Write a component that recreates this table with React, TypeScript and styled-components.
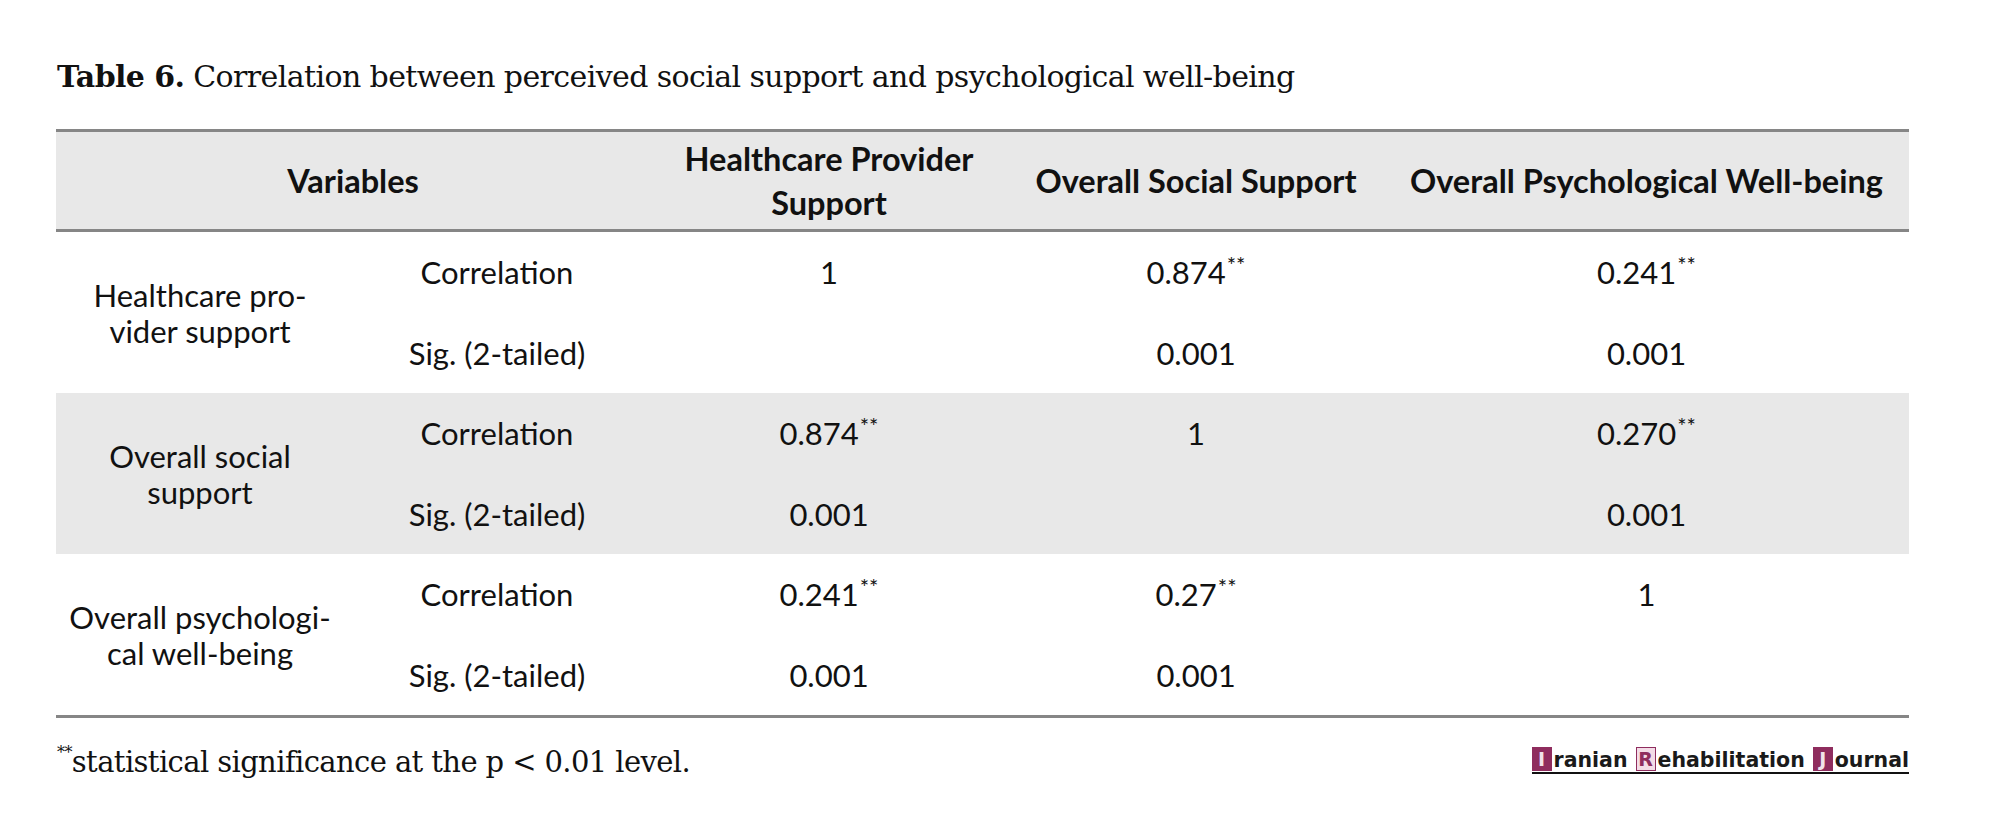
import React from 'react'
import styled, { createGlobalStyle } from 'styled-components'

const GlobalStyle = createGlobalStyle`
  html, body {
    margin: 0;
    padding: 0;
    background: #fff;
  }
`

const SERIF = '"DejaVu Serif", "Liberation Serif", serif'
const SANS = 'Lato, "Open Sans", sans-serif'
const RULE = '3px solid #868686'
const SHADE = '#e8e8e8'

const Page = styled.div`
  width: 1853px;
  padding: 58px 0 0 56px;
  color: #111;
`

const Caption = styled.div`
  font-family: ${SERIF};
  font-size: 30px;
  line-height: 38px;
  margin-bottom: 33px;
  padding-left: 1px;
  letter-spacing: -0.6px;

  b {
    font-weight: 700;
  }
`

const Table = styled.table`
  width: 1853px;
  border-collapse: collapse;
  table-layout: fixed;
  font-family: ${SANS};
  font-size: 31px;
  border-top: ${RULE};
  border-bottom: ${RULE};
`

const Head = styled.thead`
  background: ${SHADE};
  border-bottom: ${RULE};
`

const HeadCell = styled.th`
  height: 97px;
  padding: 0;
  font-weight: 700;
  font-size: 32.5px;
  line-height: 44px;
  text-align: center;
  vertical-align: middle;
  white-space: nowrap;
`

const Group = styled.tbody<{ shaded?: boolean }>`
  background: ${({ shaded }) => (shaded ? SHADE : '#fff')};
`

const Cell = styled.td`
  height: 80.5px;
  padding: 0;
  text-align: center;
  vertical-align: middle;
  line-height: 36px;
  white-space: nowrap;
`

const VarCell = styled(Cell)`
  padding: 0;
`

const Sup = styled.sup`
  font-size: 22px;
  line-height: 0;
  vertical-align: 11px;
  margin-left: 1px;
`

const Footer = styled.div`
  width: 1853px;
  display: flex;
  justify-content: space-between;
  align-items: center;
  margin-top: 27px;
`

const Note = styled.div`
  font-family: ${SERIF};
  font-size: 29px;
  padding-left: 1px;
  letter-spacing: -0.6px;

  sup {
    font-size: 16px;
    vertical-align: 14px;
    line-height: 0;
  }
`

const Logo = styled.div`
  display: flex;
  align-items: flex-end;
  font-family: "DejaVu Sans", Verdana, sans-serif;
  font-weight: 700;
  font-size: 20.5px;
  color: #1a1a1a;
  border-bottom: 2px solid #111;
  padding-bottom: 1px;
  line-height: 22px;
  margin-top: -4px;
`

const LogoWord = styled.span`
  display: flex;
  align-items: flex-end;
  margin-right: 8px;

  &:last-child {
    margin-right: 0;
  }
`

const Initial = styled.span<{ light?: boolean }>`
  display: inline-flex;
  align-items: center;
  justify-content: center;
  width: 18px;
  height: 22px;
  margin-right: 2px;
  background: ${({ light }) => (light ? '#f3dce7' : '#8f2d5e')};
  border: 1px solid #8f2d5e;
  color: ${({ light }) => (light ? '#8f2d5e' : '#f1e4ea')};
  font-size: 19px;
`

type Val = { v: string; sig?: boolean }

const rows: { label: string[]; corr: Val[]; p: string[] }[] = [
  {
    label: ['Healthcare pro-', 'vider support'],
    corr: [{ v: '1' }, { v: '0.874', sig: true }, { v: '0.241', sig: true }],
    p: ['', '0.001', '0.001'],
  },
  {
    label: ['Overall social', 'support'],
    corr: [{ v: '0.874', sig: true }, { v: '1' }, { v: '0.270', sig: true }],
    p: ['0.001', '', '0.001'],
  },
  {
    label: ['Overall psychologi-', 'cal well-being'],
    corr: [{ v: '0.241', sig: true }, { v: '0.27', sig: true }, { v: '1' }],
    p: ['0.001', '0.001', ''],
  },
]

const widths = [288, 306, 358, 376, 525]

export default function App() {
  return (
    <Page>
      <GlobalStyle />
      <Caption>
        <b>Table 6.</b> Correlation between perceived social support and psychological well-being
      </Caption>
      <Table>
        <colgroup>
          {widths.map((w, i) => (
            <col key={i} style={{ width: w }} />
          ))}
        </colgroup>
        <Head>
          <tr>
            <HeadCell colSpan={2}>Variables</HeadCell>
            <HeadCell>
              Healthcare Provider
              <br />
              Support
            </HeadCell>
            <HeadCell>Overall Social Support</HeadCell>
            <HeadCell>Overall Psychological Well-being</HeadCell>
          </tr>
        </Head>
        {rows.map((r, i) => (
          <Group key={i} shaded={i === 1}>
            <tr>
              <VarCell rowSpan={2}>
                {r.label[0]}
                <br />
                {r.label[1]}
              </VarCell>
              <Cell>Correlation</Cell>
              {r.corr.map((c, j) => (
                <Cell key={j}>
                  {c.v}
                  {c.sig && <Sup>**</Sup>}
                </Cell>
              ))}
            </tr>
            <tr>
              <Cell>Sig. (2-tailed)</Cell>
              {r.p.map((p, j) => (
                <Cell key={j}>{p}</Cell>
              ))}
            </tr>
          </Group>
        ))}
      </Table>
      <Footer>
        <Note>
          <sup>**</sup>statistical significance at the p &lt; 0.01 level.
        </Note>
        <Logo>
          <LogoWord>
            <Initial>I</Initial>ranian
          </LogoWord>
          <LogoWord>
            <Initial light>R</Initial>ehabilitation
          </LogoWord>
          <LogoWord>
            <Initial>J</Initial>ournal
          </LogoWord>
        </Logo>
      </Footer>
    </Page>
  )
}
